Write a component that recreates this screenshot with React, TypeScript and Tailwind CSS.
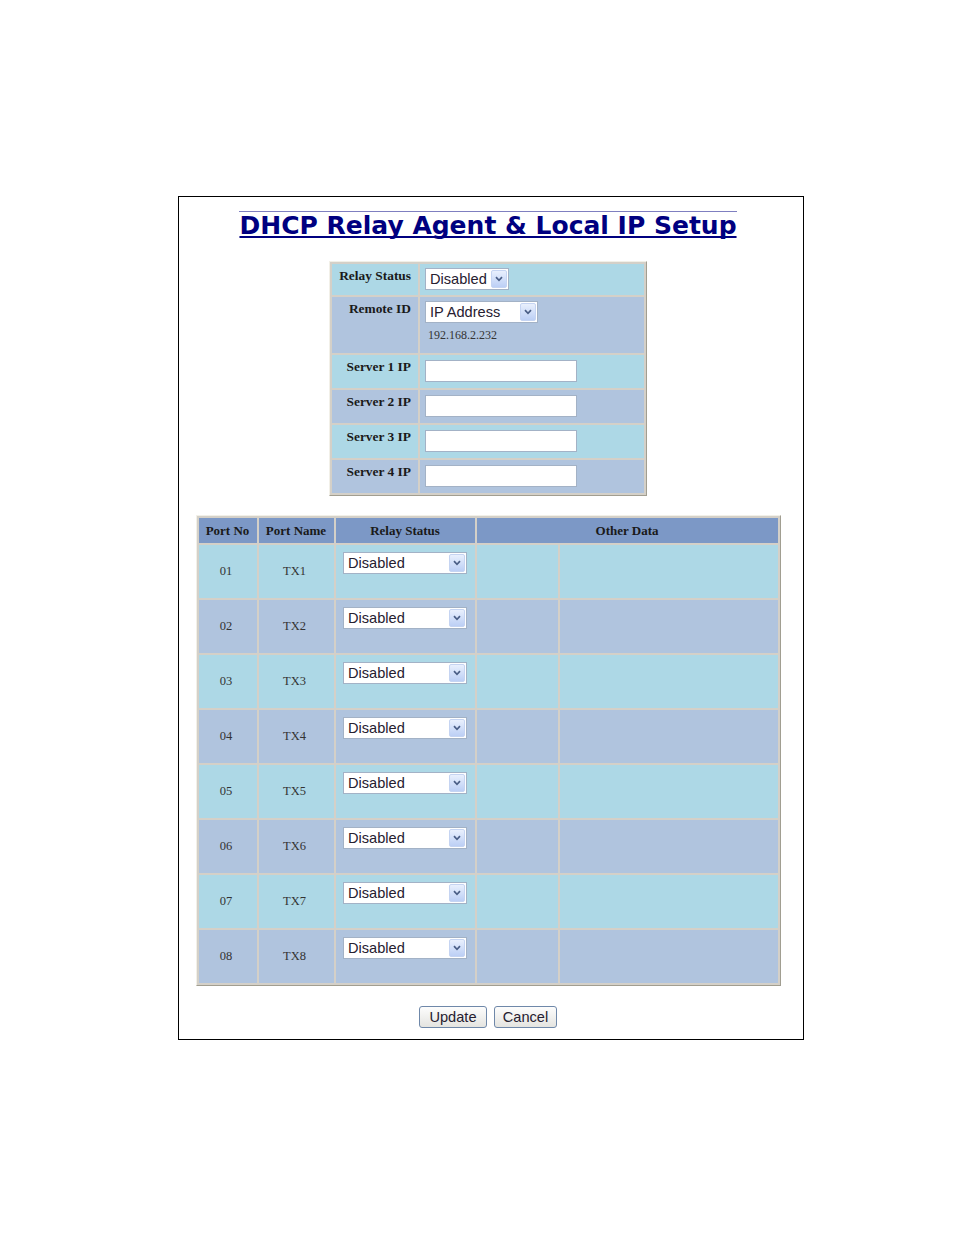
import React from "react"

const relayRows = [
  { label: "Relay Status", kind: "status" },
  { label: "Remote ID", kind: "remote" },
  { label: "Server 1 IP", kind: "ip" },
  { label: "Server 2 IP", kind: "ip" },
  { label: "Server 3 IP", kind: "ip" },
  { label: "Server 4 IP", kind: "ip" },
]

const ports = ["01", "02", "03", "04", "05", "06", "07", "08"]

function Chevron() {
  return (
    <svg width="8" height="6" viewBox="0 0 8 6">
      <path d="M1 1.2 L4 4.3 L7 1.2" stroke="#4a5e86" strokeWidth="1.7" fill="none" />
    </svg>
  )
}

function FakeSelect({ value, width }: { value: string; width: string }) {
  return (
    <div className={`flex h-[22px] items-stretch border border-[#a3b2c6] bg-white p-px ${width}`}>
      <span className="flex flex-1 items-center pl-[3px] font-['Liberation_Sans',Arial,sans-serif] text-[14.6px] leading-none text-[#262030]">
        {value}
      </span>
      <span className="flex w-[16px] items-center justify-center rounded-[2px] border border-[#c5d4f2] bg-linear-to-b from-[#e9f0fd] to-[#bccff5]">
        <Chevron />
      </span>
    </div>
  )
}

function TextBox() {
  return <div className="h-[22px] w-[152px] border border-[#a3b2c6] bg-white" />
}

function RelaySetup() {
  return (
    <table className="mt-[21px] w-[318px] border-separate border-spacing-[2px] border border-t-[#f2f0e8] border-l-[#f2f0e8] border-r-[#a19e91] border-b-[#a19e91] bg-[#d4d0c8]">
      <tbody>
        {relayRows.map((row, i) => {
          const bg = i % 2 === 0 ? "bg-[#add8e6]" : "bg-[#b0c4de]"
          const h = row.kind === "status" ? "h-[31px]" : row.kind === "remote" ? "h-[56px]" : "h-[33px]"
          return (
            <tr key={row.label}>
              <td className={`${bg} ${h} w-[86px] pr-[7px] pt-[4px] text-right align-top font-['Liberation_Serif',serif] text-[13.4px] font-bold leading-[15px] text-[#1a1a1a]`}>
                {row.label}
              </td>
              <td className={`${bg} ${h} pl-[5px] align-top ${row.kind === "ip" ? "pt-[5px]" : "pt-[4px]"}`}>
                {row.kind === "status" && <FakeSelect value="Disabled" width="w-[84px]" />}
                {row.kind === "remote" && (
                  <div>
                    <FakeSelect value="IP Address" width="w-[113px]" />
                    <div className="mt-[5px] pl-[3px] font-['Liberation_Serif',serif] text-[12px] leading-[14px] text-[#333]">
                      192.168.2.232
                    </div>
                  </div>
                )}
                {row.kind === "ip" && <TextBox />}
              </td>
            </tr>
          )
        })}
      </tbody>
    </table>
  )
}

function PortTable() {
  const head = "h-[25px] bg-[#7c98c6] text-center align-middle font-['Liberation_Serif',serif] text-[13px] font-bold text-[#1a1a1a]"
  return (
    <table className="mt-[19px] w-[585px] border-separate border-spacing-[2px] border border-t-[#f2f0e8] border-l-[#f2f0e8] border-r-[#a19e91] border-b-[#a19e91] bg-[#d4d0c8]">
      <thead>
        <tr>
          <th className={`${head} w-[58px]`}>Port No</th>
          <th className={`${head} w-[75px]`}>Port Name</th>
          <th className={`${head} w-[139px]`}>Relay Status</th>
          <th className={head} colSpan={2}>Other Data</th>
        </tr>
      </thead>
      <tbody>
        {ports.map((p, i) => {
          const bg = i % 2 === 0 ? "bg-[#add8e6]" : "bg-[#b0c4de]"
          const cell = `${bg} h-[53px] text-center align-middle font-['Liberation_Serif',serif] text-[12.5px] text-[#333]`
          return (
            <tr key={p}>
              <td className={`${cell} pr-[3px]`}>{p}</td>
              <td className={`${cell} pr-[3px]`}>TX{i + 1}</td>
              <td className={`${bg} h-[53px] pt-[7px] align-top`}>
                <div className="flex justify-center">
                  <FakeSelect value="Disabled" width="w-[124px]" />
                </div>
              </td>
              <td className={`${bg} h-[53px] w-[81px]`} />
              <td className={`${bg} h-[53px] w-[218px]`} />
            </tr>
          )
        })}
      </tbody>
    </table>
  )
}

function Btn({ label, width }: { label: string; width: string }) {
  return (
    <button
      className={`h-[22px] ${width} rounded-[3px] border border-[#6f88a9] bg-linear-to-b from-[#fdfdfd] to-[#e4e4e0] font-['Liberation_Sans',Arial,sans-serif] text-[14.6px] leading-none text-[#262030]`}
    >
      {label}
    </button>
  )
}

export default function App() {
  return (
    <div className="min-h-[1235px] bg-white pl-[178px] pt-[196px]">
      <div className="flex h-[844px] w-[626px] flex-col items-center border border-black pr-[6px] pt-[14px]">
        <div className="border-t border-[#7f7fc0] font-['DejaVu_Sans',Verdana,sans-serif] text-[25px] font-bold leading-[28px] text-[#000080] underline decoration-[#000080] [text-decoration-skip-ink:none]">
          DHCP Relay Agent &amp; Local IP Setup
        </div>

        <RelaySetup />
        <PortTable />

        <div className="mt-[20px] flex gap-[7px]">
          <Btn label="Update" width="w-[68px]" />
          <Btn label="Cancel" width="w-[63px]" />
        </div>
      </div>
    </div>
  )
}
